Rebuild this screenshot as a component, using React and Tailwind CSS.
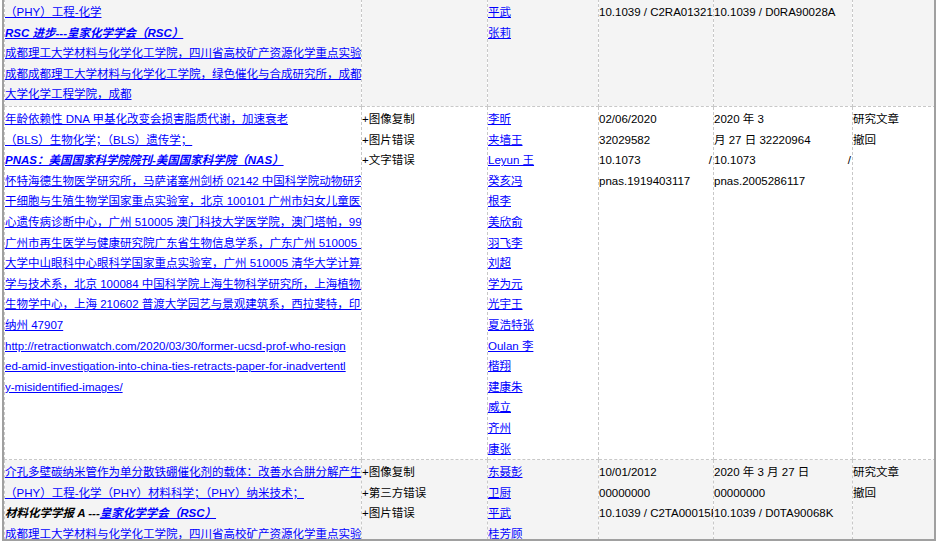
import React from 'react';

const L = ({ children, className = '' }) => (
  <div className={`h-[20.6px] leading-[20.6px] whitespace-nowrap overflow-hidden ${className}`}>{children}</div>
);

const A = ({ children, bold }) => (
  <L>
    <span className={`text-[#0000ff] underline ${bold ? 'font-bold italic' : ''}`}>{children}</span>
  </L>
);

const Slash = ({ a }) => (
  <L className="flex justify-between pr-[1px]"><span>{a}</span><span>/</span></L>
);

const td = 'align-top border border-dashed border-[#c8c8c8] p-0 pt-[2px] overflow-hidden';

const row2Names = ['李昕', '夹墙王', 'Leyun 王', '癸亥冯', '根李', '美欣俞', '羽飞李', '刘超', '学为元', '光宇王', '夏浩特张', 'Oulan 李', '楷翔', '建康朱', '威立', '齐州', '康张'];

export default function App() {
  return (
    <div className="w-[937px] h-[547px] bg-white overflow-hidden text-[11.5px] text-black" style={{ fontFamily: '"Liberation Sans", "Noto Sans CJK SC", sans-serif' }}>
      <div className="w-[934px] h-[542px] ml-[2px] mt-[-1px] border-2 border-t-0 border-[#a0a0a0] overflow-hidden">
        <table className="table-fixed border-collapse w-[931px]">
          <colgroup>
            <col className="w-[357px]" />
            <col className="w-[126px]" />
            <col className="w-[111px]" />
            <col className="w-[115px]" />
            <col className="w-[139px]" />
            <col className="w-[83px]" />
          </colgroup>
          <tbody>
            <tr className="bg-[#f4f4f4] h-[107px]">
              <td className={td}>
                <A>（PHY）工程-化学</A>
                <A bold>RSC 进步---皇家化学学会（RSC）</A>
                <A>成都理工大学材料与化学化工学院，四川省高校矿产资源化学重点实验室，</A>
                <A>成都成都理工大学材料与化学化工学院，绿色催化与合成研究所，成都四川</A>
                <A>大学化学工程学院，成都</A>
              </td>
              <td className={td}></td>
              <td className={td}><A>平武</A><A>张莉</A></td>
              <td className={td}><L>10.1039 / C2RA01321E</L></td>
              <td className={td}><L>10.1039 / D0RA90028A</L></td>
              <td className={td}></td>
            </tr>
            <tr className="h-[353px]">
              <td className={td}>
                <A>年龄依赖性 DNA 甲基化改变会损害脂质代谢，加速衰老</A>
                <A>（BLS）生物化学；（BLS）遗传学；</A>
                <A bold>PNAS：美国国家科学院院刊-美国国家科学院（NAS）</A>
                <A>怀特海德生物医学研究所，马萨诸塞州剑桥 02142 中国科学院动物研究所，</A>
                <A>干细胞与生殖生物学国家重点实验室，北京 100101 广州市妇女儿童医学中</A>
                <A>心遗传病诊断中心，广州 510005 澳门科技大学医学院，澳门塔帕，9990078</A>
                <A>广州市再生医学与健康研究院广东省生物信息学系，广东广州 510005 中山</A>
                <A>大学中山眼科中心眼科学国家重点实验室，广州 510005 清华大学计算机科</A>
                <A>学与技术系，北京 100084 中国科学院上海生物科学研究所，上海植物胁迫</A>
                <A>生物学中心，上海 210602 普渡大学园艺与景观建筑系，西拉斐特，印第安</A>
                <A>纳州 47907</A>
                <A>http://retractionwatch.com/2020/03/30/former-ucsd-prof-who-resign</A>
                <A>ed-amid-investigation-into-china-ties-retracts-paper-for-inadvertentl</A>
                <A>y-misidentified-images/</A>
              </td>
              <td className={td}><L>+图像复制</L><L>+图片错误</L><L>+文字错误</L></td>
              <td className={td}>{row2Names.map((n) => <A key={n}>{n}</A>)}</td>
              <td className={td}>
                <L>02/06/2020</L><L>32029582</L><Slash a="10.1073" /><L>pnas.1919403117</L>
              </td>
              <td className={td}>
                <L>2020 年 3</L><L>月 27 日 32220964</L><Slash a="10.1073" /><L>pnas.2005286117</L>
              </td>
              <td className={td}><L>研究文章</L><L>撤回</L></td>
            </tr>
            <tr className="bg-[#f4f4f4] h-[84px]">
              <td className={td}>
                <A>介孔多壁碳纳米管作为单分散铁硼催化剂的载体：改善水合肼分解产生的氢</A>
                <A>（PHY）工程-化学（PHY）材料科学；（PHY）纳米技术；</A>
                <L><span className="font-bold italic">材料化学学报 A ---</span><span className="text-[#0000ff] underline font-bold italic">皇家化学学会（RSC）</span></L>
                <A>成都理工大学材料与化学化工学院，四川省高校矿产资源化学重点实验室，</A>
              </td>
              <td className={td}><L>+图像复制</L><L>+第三方错误</L><L>+图片错误</L></td>
              <td className={td}><A>东聂彭</A><A>卫厨</A><A>平武</A><A>桂芳顾</A></td>
              <td className={td}><L>10/01/2012</L><L>00000000</L><L>10.1039 / C2TA00015F</L></td>
              <td className={td}><L>2020 年 3 月 27 日</L><L>00000000</L><L>10.1039 / D0TA90068K</L></td>
              <td className={td}><L>研究文章</L><L>撤回</L></td>
            </tr>
          </tbody>
        </table>
      </div>
    </div>
  );
}
